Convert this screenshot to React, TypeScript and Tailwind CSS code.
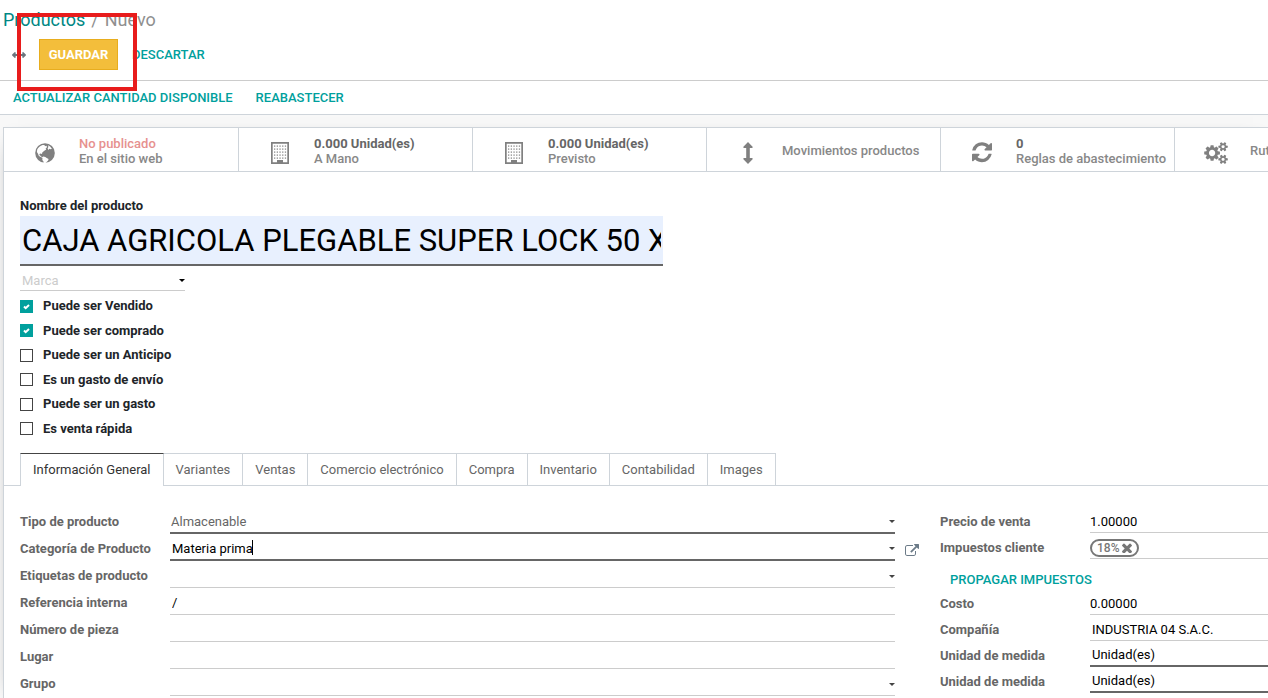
import React, { useState } from 'react';
import { FaArrowsAltH } from 'react-icons/fa';

interface IconProps {
    className?: string;
}

const GlobeIcon: React.FC<IconProps> = ({ className }) => (
    <svg viewBox="0 0 20 20" className={className}>
        <circle cx="10" cy="10" r="9.800" fill="currentColor" />
        <path
            fill="#fff"
            d="M2.200 6.500C3.300 4.200 5.300 2.500 7.600 1.900l1.800.2.600 1.200 1.300-.5.800 1.200-1.500 1.500.6 1-2.200 1.600-1.700 1.400-.3 1.500-1.500-.6-1.200.5.500 1.700 1.200.3.900 1.500 1.400-.9 2 .4 1.400 1.200 1.900.8-.5 1.700-1.500 1.500-1.700 1.500-1.200.3-.2-2.500-1.200-1.500.2-1.600-1.600-1.300-2-.9-.9-2.300L1.900 9zM13 2.300l2.100 1.100 1.800 2.300-1.200.6-1.300-.6-.9 1.200-.9-1.500.8-1.300z"
        />
    </svg>
);

const BuildingIcon: React.FC<IconProps> = ({ className }) => (
    <svg viewBox="0 0 18 23" className={className} fill="currentColor">
        <path fillRule="evenodd" d="M0 1h18v22H0zM1.700 2.700v18.600H6V19h6v2.300h4.300V2.700z" />
        {[4.5, 7.5, 10.5, 13.5, 16.5].map((y) => (
            <React.Fragment key={y}>
                {[3, 5.7, 8.4, 11.1, 13.8].map((x) => (
                    <rect key={x} x={x} y={y} width="1.300" height="1.200" />
                ))}
            </React.Fragment>
        ))}
    </svg>
);

const ArrowsVIcon: React.FC<IconProps> = ({ className }) => (
    <svg viewBox="0 0 10 22" className={className} fill="currentColor">
        <path d="M5 0l4.600 4.800q.5 1.200-.8 1.200H6.800v10h2q1.300 0 .8 1.200L5 22 .4 17.200Q-.1 16 1.200 16h2V6h-2Q-.1 6 .4 4.800z" />
    </svg>
);

const TimesIcon: React.FC<IconProps> = ({ className }) => (
    <svg viewBox="300 300 1192 1192" className={className} fill="currentColor">
        <path d="M1490 1322q0 40-28 68l-136 136q-28 28-68 28t-68-28l-294-294-294 294q-28 28-68 28t-68-28l-136-136q-28-28-28-68t28-68l294-294-294-294q-28-28-28-68t28-68l136-136q28-28 68-28t68 28l294 294 294-294q28-28 68-28t68 28l136 136q28 28 28 68t-28 68l-294 294 294 294q28 28 28 68z" />
    </svg>
);

const RefreshIcon: React.FC<IconProps> = ({ className }) => (
    <svg viewBox="0 0 1536 1664" className={className} fill="currentColor">
        <path d="M1511 928q0 5-1 7-64 268-268 434.500t-478 166.500q-146 0-282.500-55t-243.500-157l-129 129q-19 19-45 19t-45-19-19-45v-448q0-26 19-45t45-19h448q26 0 45 19t19 45-19 45l-137 137q71 66 161 102t187 36q134 0 250-65t186-179q11-17 53-117 8-23 30-23h192q13 0 22.500 9.500t9.500 22.500zm25-800v448q0 26-19 45t-45 19h-448q-26 0-45-19t-19-45 19-45l138-138q-148-137-349-137-134 0-250 65t-186 179q-11 17-53 117-8 23-30 23h-199q-13 0-22.500-9.500t-9.500-22.500v-7q65-268 270-434.500t480-166.500q146 0 284 55.500t245 156.500l130-129q19-19 45-19t45 19 19 45z" />
    </svg>
);

const CogsIcon: React.FC<IconProps> = ({ className }) => (
    <svg viewBox="0 0 1920 1792" className={className} fill="currentColor">
        <path d="M896 896q0-106-75-181t-181-75-181 75-75 181 75 181 181 75 181-75 75-181zm768 512q0-52-38-90t-90-38-90 38-38 90q0 53 37.500 90.500t90.500 37.500 90.500-37.500 37.500-90.500zm0-1024q0-52-38-90t-90-38-90 38-38 90q0 53 37.500 90.500t90.500 37.500 90.500-37.500 37.500-90.500zm-384 421v185q0 10-7 19.500t-16 10.500l-155 24q-11 35-32 76 34 48 90 115 7 11 7 20 0 12-7 19-23 30-82.500 89.500t-78.500 59.500q-11 0-21-7l-115-90q-37 19-77 31-11 108-23 155-7 24-30 24h-186q-11 0-20-7.500t-10-17.500l-23-153q-34-10-75-31l-118 89q-7 7-20 7-11 0-21-8-144-133-144-160 0-9 7-19 10-14 41-53t47-61q-23-44-35-82l-152-24q-10-1-17-9.500t-7-19.500v-185q0-10 7-19.500t16-10.500l155-24q11-35 32-76-34-48-90-115-7-11-7-20 0-12 7-20 22-30 82-89t79-59q11 0 21 7l115 90q34-18 77-32 11-108 23-154 7-24 30-24h186q11 0 20 7.500t10 17.500l23 153q34 10 75 31l118-89q8-7 20-7 11 0 21 8 144 133 144 160 0 8-7 19-12 16-42 54t-45 60q23 48 34 82l152 23q10 2 17 10.500t7 19.500zm640 533v140q0 16-149 31-12 27-30 52 51 113 51 138 0 4-4 7-122 71-124 71-8 0-46-47t-52-68q-20 2-30 2t-30-2q-14 21-52 68t-46 47q-2 0-124-71-4-3-4-7 0-25 51-138-18-25-30-52-149-15-149-31v-140q0-16 149-31 13-29 30-52-51-113-51-138 0-4 4-7 4-2 35-20t59-34 30-16q8 0 46 46.500t52 67.500q20-2 30-2t30 2q51-71 92-112l6-2q4 0 124 70 4 3 4 7 0 25-51 138 17 23 30 52 149 15 149 31zm0-1024v140q0 16-149 31-12 27-30 52 51 113 51 138 0 4-4 7-122 71-124 71-8 0-46-47t-52-68q-20 2-30 2t-30-2q-14 21-52 68t-46 47q-2 0-124-71-4-3-4-7 0-25 51-138-18-25-30-52-149-15-149-31v-140q0-16 149-31 13-29 30-52-51-113-51-138 0-4 4-7 4-2 35-20t59-34 30-16q8 0 46 46.500t52 67.500q20-2 30-2t30 2q51-71 92-112l6-2q4 0 124 70 4 3 4 7 0 25-51 138 17 23 30 52 149 15 149 31z" />
    </svg>
);

const ExternalLinkIcon: React.FC<IconProps> = ({ className }) => (
    <svg viewBox="0 0 1792 1536" className={className} fill="currentColor">
        <path d="M1408 928v320q0 119-84.500 203.500t-203.500 84.500h-832q-119 0-203.500-84.500t-84.500-203.500v-832q0-119 84.500-203.500t203.500-84.500h704q14 0 23 9t9 23v64q0 14-9 23t-23 9h-704q-66 0-113 47t-47 113v832q0 66 47 113t113 47h832q66 0 113-47t47-113v-320q0-14 9-23t23-9h64q14 0 23 9t9 23zm384-864v512q0 26-19 45t-45 19-45-19l-176-176-652 652q-10 10-23 10t-23-10l-114-114q-10-10-10-23t10-23l652-652-176-176q-19-19-19-45t19-45 45-19h512q26 0 45 19t19 45z" />
    </svg>
);

const Caret: React.FC<IconProps> = ({ className }) => (
    <svg viewBox="0 0 6 3" className={`h-[3px] w-1.5 shrink-0 ${className ?? ''}`} fill="currentColor">
        <path d="M0 0h6L3 3z" />
    </svg>
);

const stats = [
    { icon: <GlobeIcon className="size-5" />, value: 'No publicado', label: 'En el sitio web', danger: true },
    { icon: <BuildingIcon className="h-[23px] w-[18px]" />, value: '0.000 Unidad(es)', label: 'A Mano' },
    { icon: <BuildingIcon className="h-[23px] w-[18px]" />, value: '0.000 Unidad(es)', label: 'Previsto' },
    { icon: <ArrowsVIcon className="h-[22px] w-2.5" />, label: 'Movimientos productos' },
    { icon: <RefreshIcon className="h-[22px] w-5" />, value: '0', label: 'Reglas de abastecimiento' },
    { icon: <CogsIcon className="h-[22px] w-6" />, label: 'Rut' },
];

const options = [
    { id: 'sale_ok', label: 'Puede ser Vendido', checked: true },
    { id: 'purchase_ok', label: 'Puede ser comprado', checked: true },
    { id: 'down_payment', label: 'Puede ser un Anticipo', checked: false },
    { id: 'landed_cost', label: 'Es un gasto de envío', checked: false },
    { id: 'expense_ok', label: 'Puede ser un gasto', checked: false },
    { id: 'quick_sale', label: 'Es venta rápida', checked: false },
];

const tabs = ['Información General', 'Variantes', 'Ventas', 'Comercio electrónico', 'Compra', 'Inventario', 'Contabilidad', 'Images'];

interface FieldProps {
    id: string;
    label: string;
    value?: string;
    required?: boolean;
    dropdown?: boolean;
    editing?: boolean;
    external?: boolean;
    numeric?: boolean;
    compact?: boolean;
}

const Field: React.FC<FieldProps> = ({ id, label, value = '', required, dropdown, editing, external, numeric, compact }) => (
    <div className={`flex ${compact ? 'h-[26px]' : 'h-[27px]'}`}>
        <label htmlFor={id} className="w-[150px] shrink-0 pt-[7px] font-bold leading-4 text-[#666]">{label}</label>
        <div className={`relative flex min-w-0 flex-1 items-center pt-1 ${required ? 'border-b-2 border-[#666]' : 'border-b border-[#ccc]'}`}>
            <input id={id} defaultValue={value} className={`w-full min-w-0 bg-transparent leading-4 text-black outline-none ${numeric ? 'pl-0' : 'pl-0.5'}`} />
            {editing && <span className="absolute bottom-1 left-[82px] h-[15px] w-px bg-black" />}
            {dropdown && <Caret className="text-[#444]" />}
        </div>
        {!compact && (
            <div className="flex w-[45px] shrink-0 items-center pl-2.5 pt-1">
                {external && (
                    <button aria-label="Enlace externo" className="text-[#6c7b88]">
                        <ExternalLinkIcon className="h-3 w-3.5" />
                    </button>
                )}
            </div>
        )}
    </div>
);

export default function App() {
    const [activeTab, setActiveTab] = useState(tabs[0]);

    return (
        <div className="relative min-h-screen overflow-hidden bg-[#f8f8f8] font-[Roboto,sans-serif] text-[13px] leading-4 text-[#212529]">
            <header className="h-[81px] border-b border-[#ccc] bg-white">
                <nav className="flex gap-1.5 px-[3px] pt-2 text-lg leading-6 text-[#8f8f8f]">
                    <a href="#productos" className="text-[#008784]">Productos</a>
                    <span>/</span>
                    <span>Nuevo</span>
                </nav>
                <div className="flex items-center pl-3 pt-[7px]">
                    <FaArrowsAltH size={14} className="text-[#6c757d]" />
                    <button className="ml-[13px] h-[31px] w-[79px] border border-[#e8ad1e] bg-[#f3be3b] font-bold text-white">GUARDAR</button>
                    <button className="ml-[14px] font-medium text-[#00a09d]">DESCARTAR</button>
                </div>
            </header>

            <div className="flex h-[34px] items-center gap-[23px] border-b border-[#ced4da] bg-white px-[13px] font-medium text-[#00a09d]">
                <button>ACTUALIZAR CANTIDAD DISPONIBLE</button>
                <button>REABASTECER</button>
            </div>

            <main className="ml-[3px] mt-3 min-h-[571px] border-l border-t border-[#ced4da] bg-white shadow-[0_5px_20px_-15px_#000]">
                <div className="flex overflow-hidden border-b border-[#ced4da]">
                    {stats.map((stat, i) => (
                        <button
                            key={i}
                            className={`flex h-[43px] w-[234px] shrink-0 items-center text-left font-medium leading-[15px] text-[#888] ${i > 0 ? 'border-l border-[#ced4da]' : ''}`}
                        >
                            <span className="flex w-[75px] shrink-0 justify-center pl-1.5 pt-1.5 text-[#808080]">{stat.icon}</span>
                            <span className="flex flex-col whitespace-nowrap pt-0.5">
                                {stat.value && <span className={stat.danger ? 'text-[#e6918f]' : 'font-bold text-[#666]'}>{stat.value}</span>}
                                <span>{stat.label}</span>
                            </span>
                        </button>
                    ))}
                </div>

                <section className="px-4 pt-[26px]">
                    <label htmlFor="name" className="block pb-0.5 font-bold">Nombre del producto</label>
                    <input
                        id="name"
                        defaultValue="CAJA AGRICOLA PLEGABLE SUPER LOCK 50 X 30"
                        className="block h-[50px] w-[643px] max-w-full border-b-2 border-[#666] bg-[#e8f0fe] px-0.5 text-[31px] text-black outline-none"
                    />
                    <div className="mt-[5px] flex h-5 w-[165px] items-center border-b border-[#ccc]">
                        <input aria-label="Marca" placeholder="Marca" className="w-full min-w-0 pl-0.5 outline-none placeholder:text-[#ccc]" />
                        <Caret className="text-black" />
                    </div>
                    <div className="grid h-[150px] grid-rows-6 pt-[3px]">
                        {options.map((option) => (
                            <div key={option.id} className="flex items-center">
                                <span className="relative flex w-[23px] items-center">
                                    <input
                                        id={option.id}
                                        type="checkbox"
                                        defaultChecked={option.checked}
                                        className="peer size-[13px] appearance-none border border-[#444] bg-white checked:border-[#00a09d] checked:bg-[#00a09d]"
                                    />
                                    <svg viewBox="0 0 13 13" className="pointer-events-none absolute left-0 hidden size-[13px] fill-none stroke-white stroke-2 peer-checked:block">
                                        <path d="M4 6.500l1.700 1.700L9 5" />
                                    </svg>
                                </span>
                                <label htmlFor={option.id} className="font-bold">{option.label}</label>
                            </div>
                        ))}
                    </div>
                </section>

                <div role="tablist" className="mt-3 flex border-b border-[#ced4da] pl-4">
                    {tabs.map((tab) => (
                        <button
                            key={tab}
                            role="tab"
                            aria-selected={tab === activeTab}
                            onClick={() => setActiveTab(tab)}
                            className={`-mb-px h-[33px] border-r border-t px-3 ${tab === activeTab
                                ? 'border-l border-x-[#ced4da] border-t-[#444] bg-white text-[#333]'
                                : 'border-b border-[#ced4da] text-[#666]'}`}
                        >
                            {tab}
                        </button>
                    ))}
                </div>

                <div className="grid grid-cols-[minmax(0,1fr)_328px] pl-4 pt-[21px]">
                    <div>
                        <div className="flex h-[27px]">
                            <label htmlFor="type" className="w-[150px] shrink-0 pt-[7px] font-bold text-[#666]">Tipo de producto</label>
                            <div className="mr-[45px] flex flex-1 items-center border-b-2 border-[#666] pt-1">
                                <select id="type" className="w-full appearance-none pl-px leading-4 text-[#666] outline-none">
                                    <option>Almacenable</option>
                                    <option>Consumible</option>
                                    <option>Servicio</option>
                                </select>
                                <Caret className="text-[#444]" />
                            </div>
                        </div>
                        <Field id="category" label="Categoría de Producto" value="Materia prima" required dropdown editing external />
                        <Field id="tags" label="Etiquetas de producto" dropdown />
                        <Field id="reference" label="Referencia interna" value="/" />
                        <Field id="part" label="Número de pieza" />
                        <Field id="place" label="Lugar" />
                        <Field id="group" label="Grupo" dropdown />
                    </div>
                    <div>
                        <Field id="price" label="Precio de venta" value="1.00000" numeric compact />
                        <div className="flex h-[26px]">
                            <span className="w-[150px] shrink-0 pt-[7px] font-bold text-[#666]">Impuestos cliente</span>
                            <div className="flex flex-1 items-center border-b border-[#ccc] pt-1">
                                <span className="flex h-[18px] items-center gap-[3px] rounded-full border-2 border-[#777] px-[5px] text-xs font-medium text-[#777]">
                                    18%
                                    <button aria-label="Eliminar"><TimesIcon className="size-2.5" /></button>
                                </span>
                            </div>
                        </div>
                        <div className="flex h-[30px] items-center pl-2.5 pt-3">
                            <button className="font-medium text-[#00a09d]">PROPAGAR IMPUESTOS</button>
                        </div>
                        <Field id="cost" label="Costo" value="0.00000" numeric compact />
                        <Field id="company" label="Compañía" value="INDUSTRIA 04 S.A.C." compact />
                        <Field id="uom" label="Unidad de medida" value="Unidad(es)" required compact />
                        <Field id="uom_po" label="Unidad de medida" value="Unidad(es)" required compact />
                    </div>
                </div>
            </main>

            {/* highlight around the save button */}
            <div className="pointer-events-none absolute left-[17px] top-[13px] h-[78px] w-[120px] border-4 border-[#e81c1c]" />
        </div>
    );
}
